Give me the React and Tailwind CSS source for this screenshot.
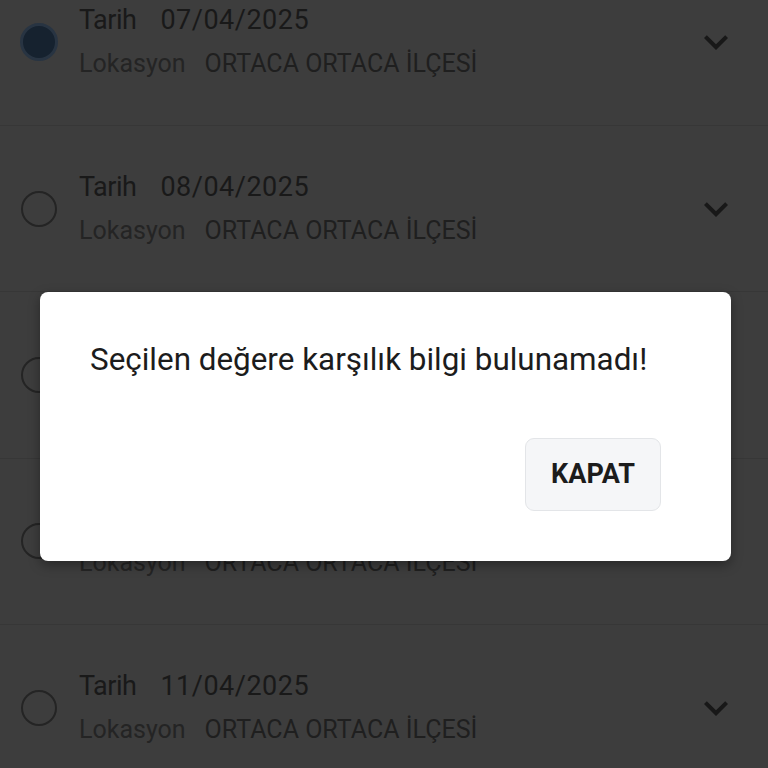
import React from "react";
import { MdExpandMore } from "react-icons/md";

const rows = [
  { date: "07/04/2025", selected: true },
  { date: "08/04/2025" },
  { date: "09/04/2025" },
  { date: "10/04/2025" },
  { date: "11/04/2025" },
];

function Radio({ selected }) {
  if (selected) {
    return (
      <div className="w-[38px] h-[38px] rounded-full border-[3px] border-[#283442] bg-[#16222f] shrink-0" />
    );
  }
  return <div className="w-[36px] h-[36px] rounded-full border-[2.5px] border-[#242424] shrink-0 mx-[1px]" />;
}

export default function App() {
  return (
    <div
      className="relative w-[768px] h-[768px] overflow-hidden bg-[#3d3d3d]"
      style={{ fontFamily: "Roboto, 'Noto Sans', sans-serif" }}
    >
      <div className="mt-[-40.5px] flex flex-col">
        {rows.map((r, i) => (
          <div
            key={i}
            className="h-[166.4px] flex items-center border-b border-[#373737] pl-[20px] pr-[28px]"
          >
            <Radio selected={r.selected} />
            <div className="ml-[21px] flex-1 flex flex-col">
              <div className="leading-[44px] text-[27px] text-[#191919]">
                <span className="tracking-[-0.5px]">Tarih</span>
                <span className="ml-[24px] tracking-[0.5px]">{r.date}</span>
              </div>
              <div className="leading-[44px] text-[25px] text-[#242424]">
                <span>Lokasyon</span>
                <span className="ml-[19px] text-[#1f1f1f]">ORTACA ORTACA İLÇESİ</span>
              </div>
            </div>
            <MdExpandMore className="text-[#181818] shrink-0" size={48} />
          </div>
        ))}
      </div>

      <div className="absolute left-[40px] top-[292px] w-[691px] h-[269px] bg-white rounded-[8px] shadow-[0_4px_12px_rgba(0,0,0,0.35)] flex flex-col pl-[50px] pr-[70px] pt-[50px] pb-[50px]">
        <div className="text-[31.4px] leading-[36px] text-[#1c1c1c] whitespace-nowrap">
          Seçilen değere karşılık bilgi bulunamadı!
        </div>
        <div className="flex-1" />
        <div className="flex justify-end">
          <button className="w-[136px] h-[73px] rounded-[9px] bg-[#f5f6f8] border border-[#e3e5e8] text-[27px] font-bold text-[#1c1c1c]">
            KAPAT
          </button>
        </div>
      </div>
    </div>
  );
}
